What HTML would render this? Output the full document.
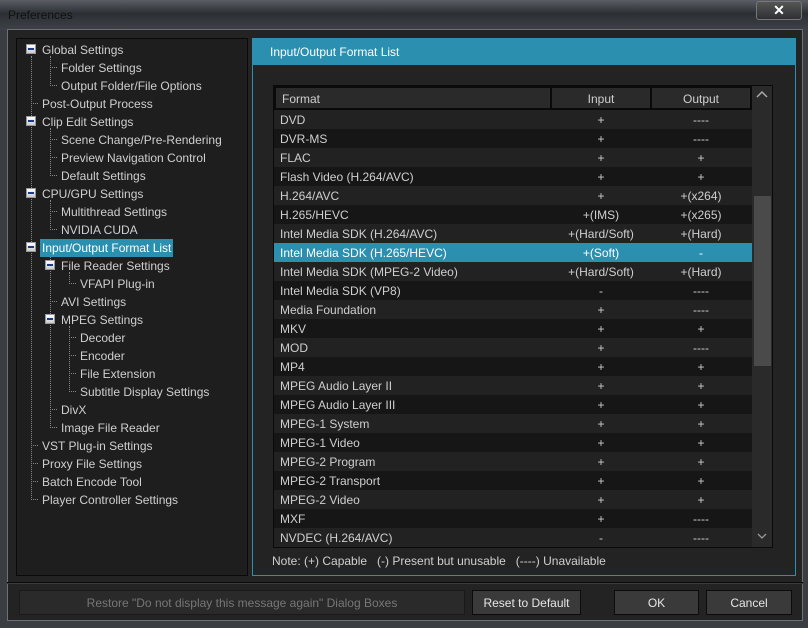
<!DOCTYPE html>
<html><head><meta charset="utf-8"><style>
*{margin:0;padding:0;box-sizing:border-box}
body{width:808px;height:628px;overflow:hidden;background:#3a3d42;font-family:"Liberation Sans",sans-serif;font-size:12px;color:#cfcfcf;position:relative}
.a{position:absolute}
.title{left:0;top:0;width:808px;height:30px;background:linear-gradient(180deg,#5a5e64 0%,#2c2f34 45%,#3e4248 100%)}
.tree .t{position:absolute;white-space:nowrap;line-height:18px;height:18px}
.box{position:absolute;width:10px;height:10px;background:linear-gradient(#fff,#ccc);border:1px solid #999}
.box:after{content:"";position:absolute;left:1px;top:3px;width:6px;height:2px;background:#1a3a8a}
.hd{position:absolute;border-top:1px dotted #888;width:7px;height:0}
.vd{position:absolute;border-left:1px dotted #888;width:0}
.row{position:absolute;left:274px;width:478px;height:19px;line-height:20px}
.row span{position:absolute;top:0}
.c1{left:6px}.c2{left:277px;width:100px;text-align:center}.c3{left:377px;width:100px;text-align:center}
.btn{position:absolute;top:590px;height:25px;background:#3a3a3a;border:1px solid #0c0c0c;text-align:center;line-height:24px;color:#e6e6e6}
</style></head><body>
<div class="a title"></div>
<div class="a" style="left:8px;top:8px;color:#111;font-size:12px">Preferences</div>
<div class="a" style="left:756px;top:1px;width:46px;height:19px;border:1px solid #777;border-radius:3px;background:linear-gradient(#555,#2e3034);color:#fff;text-align:center;font-weight:bold;line-height:17px;font-size:14px">✕</div>
<div class="a" style="left:7px;top:29px;width:796px;height:592px;background:#232323;border:1px solid #6d7075"></div>

<div class="a" style="left:16px;top:38px;width:232px;height:538px;background:#1e1e1e;border:1px solid #0a0a0a"></div>
<div class="tree">
<div class="vd" style="left:31px;top:56px;height:444px"></div>
<div class="vd" style="left:50px;top:56px;height:30px"></div>
<div class="vd" style="left:50px;top:128px;height:48px"></div>
<div class="vd" style="left:50px;top:200px;height:30px"></div>
<div class="vd" style="left:50px;top:254px;height:174px"></div>
<div class="vd" style="left:69px;top:272px;height:12px"></div>
<div class="vd" style="left:69px;top:326px;height:66px"></div>
</div>
<div class="tree" id="tr"></div>

<div class="a" style="left:252px;top:38px;width:544px;height:538px;border:1px solid #2b8fb0;background:#232323"></div>
<div class="a" style="left:253px;top:39px;width:542px;height:26px;background:#2b8fb0;color:#fff;padding-left:17px;line-height:27px">Input/Output Format List</div>
<div class="a" style="left:273px;top:85px;width:500px;height:463px;border:1px solid #0a0a0a;background:#1a1a1a"></div>
<div class="a" style="left:274px;top:86px;width:478px;height:24px;background:#2a2a2a"></div>
<div class="a" style="left:274px;top:86px;width:278px;height:24px;border:2px solid #0a0a0a;padding-left:6px;line-height:22px">Format</div>
<div class="a" style="left:550px;top:86px;width:102px;height:24px;border:2px solid #0a0a0a;text-align:center;line-height:22px">Input</div>
<div class="a" style="left:650px;top:86px;width:102px;height:24px;border:2px solid #0a0a0a;text-align:center;line-height:22px">Output</div>
<div class="a" style="left:752px;top:86px;width:20px;height:461px;background:#2a2a2a"></div>
<div class="a" style="left:754px;top:196px;width:17px;height:170px;background:#4a4a4a"></div>
<svg class="a" style="left:755px;top:90px" width="14" height="10"><path d="M2 7 L7 2 L12 7" stroke="#aaa" stroke-width="1.5" fill="none"/></svg>
<svg class="a" style="left:755px;top:531px" width="14" height="10"><path d="M3 3 L7 7 L11 3" stroke="#999" stroke-width="1.3" fill="none"/></svg>
<div id="rows"></div>
<div class="a" style="left:272px;top:554px;color:#d0d0d0">Note: (+) Capable &nbsp; (-) Present but unusable &nbsp; (----) Unavailable</div>

<div class="a" style="left:7px;top:582px;width:796px;height:1px;background:#0a0a0a"></div>
<div class="a" style="left:7px;top:583px;width:796px;height:1px;background:#3a3a3a"></div>
<div class="btn" style="left:19px;width:446px;background:#2a2a2a;color:#777;border-color:#1a1a1a">Restore "Do not display this message again" Dialog Boxes</div>
<div class="btn" style="left:472px;width:109px">Reset to Default</div>
<div class="btn" style="left:614px;width:85px">OK</div>
<div class="btn" style="left:706px;width:86px">Cancel</div>

<script>
var T=[[49,0,1,"Global Settings"],[67,1,0,"Folder Settings"],[85,1,0,"Output Folder/File Options"],[103,0,0,"Post-Output Process"],[121,0,1,"Clip Edit Settings"],[139,1,0,"Scene Change/Pre-Rendering"],[157,1,0,"Preview Navigation Control"],[175,1,0,"Default Settings"],[193,0,1,"CPU/GPU Settings"],[211,1,0,"Multithread Settings"],[229,1,0,"NVIDIA CUDA"],[247,0,1,"Input/Output Format List",1],[265,1,1,"File Reader Settings"],[283,2,0,"VFAPI Plug-in"],[301,1,0,"AVI Settings"],[319,1,1,"MPEG Settings"],[337,2,0,"Decoder"],[355,2,0,"Encoder"],[373,2,0,"File Extension"],[391,2,0,"Subtitle Display Settings"],[409,1,0,"DivX"],[427,1,0,"Image File Reader"],[445,0,0,"VST Plug-in Settings"],[463,0,0,"Proxy File Settings"],[481,0,0,"Batch Encode Tool"],[499,0,0,"Player Controller Settings"]];
var h="";T.forEach(function(r){var y=r[0],l=r[1],x=42+19*l,bx=26+19*l;
if(r[2])h+='<div class="box" style="left:'+bx+'px;top:'+(y-5)+'px"></div>';
else h+='<div class="hd" style="left:'+(bx+5)+'px;top:'+y+'px"></div>';
h+='<div class="t" style="left:'+(x-2)+'px;top:'+(y-8)+'px;padding:0 2px;'+(r[4]?'background:#2b8fb0;color:#fff;':'')+'">'+r[3]+'</div>';});
document.getElementById("tr").innerHTML=h;
var R=[["DVD","+","----"],["DVR-MS","+","----"],["FLAC","+","+"],["Flash Video (H.264/AVC)","+","+"],["H.264/AVC","+","+(x264)"],["H.265/HEVC","+(IMS)","+(x265)"],["Intel Media SDK (H.264/AVC)","+(Hard/Soft)","+(Hard)"],["Intel Media SDK (H.265/HEVC)","+(Soft)","-"],["Intel Media SDK (MPEG-2 Video)","+(Hard/Soft)","+(Hard)"],["Intel Media SDK (VP8)","-","----"],["Media Foundation","+","----"],["MKV","+","+"],["MOD","+","----"],["MP4","+","+"],["MPEG Audio Layer II","+","+"],["MPEG Audio Layer III","+","+"],["MPEG-1 System","+","+"],["MPEG-1 Video","+","+"],["MPEG-2 Program","+","+"],["MPEG-2 Transport","+","+"],["MPEG-2 Video","+","+"],["MXF","+","----"],["NVDEC (H.264/AVC)","-","----"]];
h="";R.forEach(function(r,i){var bg=i==7?"#2b8fb0":(i%2?"#161616":"#222");
h+='<div class="row" style="top:'+(110+19*i)+'px;background:'+bg+';'+(i==7?'color:#fff':'')+'"><span class="c1">'+r[0]+'</span><span class="c2">'+r[1]+'</span><span class="c3">'+r[2]+'</span></div>';});
document.getElementById("rows").innerHTML=h;
</script>
</body></html>
